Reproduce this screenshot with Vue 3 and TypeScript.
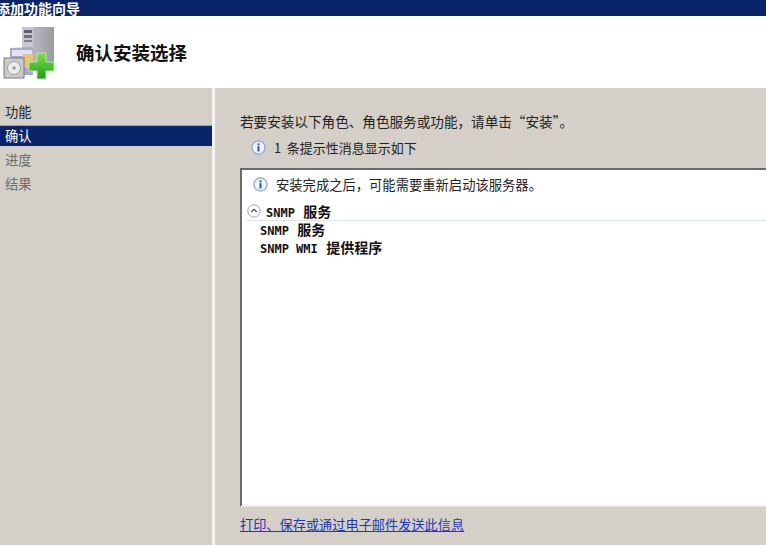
<script setup lang="ts">
const steps = [
  { label: '功能', state: 'done' },
  { label: '确认', state: 'active' },
  { label: '进度', state: 'todo' },
  { label: '结果', state: 'todo' }
];
</script>

<template>
  <div class="wizard">
    <div class="title-bar">添加功能向导</div>

    <header class="head">
      <svg class="head-icon" width="56" height="56" viewBox="0 0 56 56">
        <defs>
          <linearGradient id="tower" x1="0" x2="1" y1="0" y2="0">
            <stop offset="0" stop-color="#d6d8dc" />
            <stop offset="0.4" stop-color="#b3b5ba" />
            <stop offset="1" stop-color="#9a9ca1" />
          </linearGradient>
          <linearGradient id="plus" x1="0" x2="0" y1="0" y2="1">
            <stop offset="0" stop-color="#7fe04a" />
            <stop offset="1" stop-color="#1f9c1c" />
          </linearGradient>
        </defs>
        <path d="M21 3h32v37H21z" fill="url(#tower)" />
        <rect x="21" y="3" width="11" height="37" fill="#c7c9cf" />
        <rect x="23" y="6" width="8" height="3" fill="#5d6068" />
        <rect x="23" y="11" width="8" height="3" fill="#6d7078" />
        <rect x="23" y="16" width="8" height="2" fill="#7d8088" />
        <path d="M9 24l23-1v28H9z" fill="#a9a8d4" />
        <path d="M11 26h20v6H11z" fill="#e2e2f2" />
        <path d="M22 30h10v14H22z" fill="#e8c47a" />
        <rect x="3" y="34" width="20" height="20" fill="#c9cbca" stroke="#7a7c7c" />
        <circle cx="13" cy="44" r="6.5" fill="#ececec" stroke="#a0a0a0" />
        <circle cx="13" cy="44" r="1.8" fill="#a0a0a0" />
        <path d="M36 29h9v9h8v9h-8v8h-9v-8h-8v-9h8z" fill="url(#plus)" stroke="#b9e8a5" />
      </svg>
      <h1 class="head-title">确认安装选择</h1>
    </header>

    <div class="body">
      <nav class="side">
        <div v-for="s in steps" :key="s.label" class="step" :class="s.state">{{ s.label }}</div>
      </nav>

      <main class="panel">
        <p class="intro">若要安装以下角色、角色服务或功能，请单击“安装”。</p>
        <div class="notice">
          <svg class="info" width="15" height="15" viewBox="0 0 16 16">
            <circle cx="8" cy="8" r="7" fill="#eef3fb" stroke="#8aa8d8" stroke-width="1.4" />
            <rect x="7" y="6.6" width="2" height="5.6" fill="#1f4fa8" />
            <rect x="7" y="3.6" width="2" height="2" fill="#1f4fa8" />
          </svg>
          <span>1 条提示性消息显示如下</span>
        </div>

        <section class="box">
          <div class="msg">
            <svg class="info" width="15" height="15" viewBox="0 0 16 16">
              <circle cx="8" cy="8" r="7" fill="#eef3fb" stroke="#8aa8d8" stroke-width="1.4" />
              <rect x="7" y="6.6" width="2" height="5.6" fill="#1f4fa8" />
              <rect x="7" y="3.6" width="2" height="2" fill="#1f4fa8" />
            </svg>
            <span>安装完成之后，可能需要重新启动该服务器。</span>
          </div>
          <div class="group">
            <svg class="chevron" width="14" height="14" viewBox="0 0 14 14">
              <circle cx="7" cy="7" r="6.2" fill="#fff" stroke="#9aa3ad" />
              <path d="M4.2 8.2L7 5.4l2.8 2.8" fill="none" stroke="#444" stroke-width="1.2" />
            </svg>
            <span><span class="mono">SNMP</span> 服务</span>
          </div>
          <ul class="items">
            <li><span class="mono">SNMP</span> 服务</li>
            <li><span class="mono">SNMP WMI</span> 提供程序</li>
          </ul>
        </section>

        <a class="link" href="#">打印、保存或通过电子邮件发送此信息</a>
      </main>
    </div>
  </div>
</template>

<style>
html, body {
  margin: 0;
  overflow: hidden;
}
</style>

<style scoped>
.wizard {
  width: 766px;
  height: 545px;
  display: flex;
  flex-direction: column;
  overflow: hidden;
  background: #d4d0c8;
  font-family: "Noto Sans CJK SC", "Liberation Sans", sans-serif;
  font-size: 13px;
  color: #222;
}

.title-bar {
  height: 16px;
  line-height: 16px;
  background: #0a246a;
  color: #fff;
  font-size: 14px;
  font-weight: 700;
  text-indent: -4px;
  white-space: nowrap;
  overflow: hidden;
  flex-shrink: 0;
}

.head {
  height: 72px;
  background: #fff;
  display: flex;
  align-items: center;
  gap: 19px;
  padding-left: 1px;
  flex-shrink: 0;
}

.head-title {
  margin: 0;
  font-size: 18.5px;
  font-weight: 700;
  color: #111;
}

.body {
  flex: 1;
  display: flex;
}

.side {
  width: 212px;
  border-right: 3px solid #f4f3f0;
  padding-top: 13px;
  flex-shrink: 0;
  display: flex;
  flex-direction: column;
  gap: 3px;
}

.step {
  height: 21px;
  line-height: 21px;
  padding-left: 5px;
  font-size: 13.3px;
}

.step.active {
  background: #0a246a;
  color: #fff;
  box-shadow: inset 0 1px 0 #8ca4c8;
}

.step.todo {
  color: #6f6d68;
}

.panel {
  flex: 1;
  min-width: 0;
  padding: 23px 0 0 25px;
}

.intro {
  margin: 0;
  height: 20px;
  line-height: 20px;
  font-size: 13.6px;
  white-space: nowrap;
}

.notice {
  display: flex;
  align-items: center;
  gap: 8px;
  margin: 7px 0 0 11px;
  height: 18px;
  word-spacing: 2.5px;
  white-space: nowrap;
}

.box {
  margin-top: 12px;
  height: 339px;
  box-sizing: border-box;
  background: #fff;
  border-top: 2px solid #6b6b6b;
  border-left: 2px solid #6b6b6b;
  border-bottom: 2px solid #eceae5;
  margin-right: -4px;
  padding: 5px 0 0 3px;
}

.msg {
  display: flex;
  align-items: center;
  gap: 8px;
  height: 18px;
  padding-left: 8px;
  font-size: 13.3px;
  white-space: nowrap;
}

.group {
  display: flex;
  align-items: center;
  gap: 5px;
  margin-top: 10px;
  padding: 0 0 2px 2px;
  height: 15px;
  font-family: "DejaVu Sans Mono", "Noto Sans CJK SC", monospace;
  font-size: 14px;
  font-weight: 700;
  color: #111;
  border-bottom: 1px solid #dde3ec;
  white-space: nowrap;
}

.items {
  list-style: none;
  margin: 1px 0 0;
  padding: 0 0 0 15px;
  font-family: "DejaVu Sans Mono", "Noto Sans CJK SC", monospace;
  font-size: 14px;
  font-weight: 700;
  color: #111;
  line-height: 17px;
  white-space: nowrap;
}

.mono {
  font-size: 12px;
}

.link {
  display: block;
  width: fit-content;
  margin-top: 9px;
  font-size: 13.2px;
  line-height: 18px;
  color: #2236bb;
  text-decoration: underline;
  white-space: nowrap;
}
</style>
